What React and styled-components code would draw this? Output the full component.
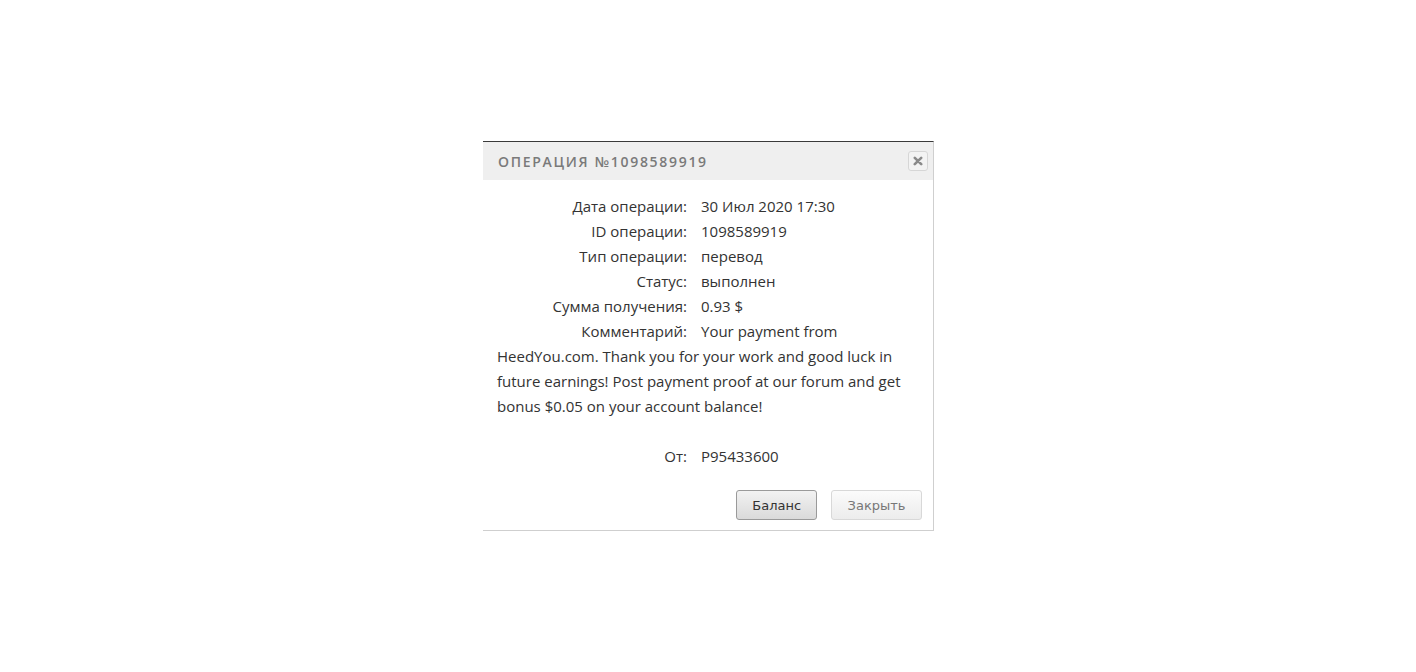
import styled, { createGlobalStyle } from 'styled-components'

const GlobalStyle = createGlobalStyle`
  html, body {
    margin: 0;
    padding: 0;
    background: #ffffff;
  }
`

const Page = styled.div`
  width: 1416px;
  height: 672px;
  display: flex;
  justify-content: center;
  align-items: flex-start;
  padding-top: 141px;
  box-sizing: border-box;
`

const Dialog = styled.div`
  width: 450px;
  margin-left: 1px;
  background: #ffffff;
  border-top: 1px solid #3a3a3a;
  border-right: 1px solid #cfcfcf;
  border-bottom: 1px solid #cfcfcf;
  font-family: "Open Sans", "Liberation Sans", sans-serif;
  color: #333333;
`

const Header = styled.div`
  height: 38px;
  background: #efefef;
  display: flex;
  align-items: center;
  justify-content: space-between;
  padding: 0 5px 0 15px;
`

const Title = styled.h3`
  margin: 0;
  font-size: 14px;
  font-weight: 600;
  letter-spacing: 1.7px;
  color: #7a7a7a;
  text-transform: uppercase;
`

const CloseButton = styled.button`
  width: 20px;
  height: 20px;
  padding: 0;
  border: 1px solid #d6d6d6;
  border-radius: 3px;
  background: #f3f3f3;
  display: flex;
  align-items: center;
  justify-content: center;
  cursor: pointer;
`

const Body = styled.div`
  padding: 14px 14px 21px 14px;
  font-size: 15px;
  line-height: 25px;
`

const Row = styled.div``

const Label = styled.span`
  display: inline-block;
  width: 190px;
  margin-right: 14px;
  text-align: right;
`

const Footer = styled.div`
  display: flex;
  justify-content: flex-end;
  gap: 14px;
  padding: 0 11px 10px 0;
`

const Button = styled.button`
  height: 30px;
  padding: 0 ${p => (p.$primary ? '15px' : '15.5px')};
  border-radius: 3px;
  font-family: "DejaVu Sans", Verdana, sans-serif;
  font-size: 13px;
  cursor: pointer;
  border: 1px solid ${p => (p.$primary ? '#9a9a9a' : '#d8d8d8')};
  color: ${p => (p.$primary ? '#333333' : '#777777')};
  background: ${p =>
    p.$primary
      ? 'linear-gradient(#f2f2f2, #dadada)'
      : 'linear-gradient(#fbfbfb, #ececec)'};
`

const rows = [
  ['Дата операции:', '30 Июл 2020 17:30'],
  ['ID операции:', '1098589919'],
  ['Тип операции:', 'перевод'],
  ['Статус:', 'выполнен'],
  ['Сумма получения:', '0.93 $'],
]

function CloseIcon() {
  return (
    <svg width="10" height="10" viewBox="0 0 10 10">
      <path
        d="M1.8 1.8 L8.2 8.2 M8.2 1.8 L1.8 8.2"
        stroke="#8a8a8a"
        strokeWidth="2.6"
        strokeLinecap="round"
      />
    </svg>
  )
}

export default function App() {
  return (
    <Page>
      <GlobalStyle />
      <Dialog>
        <Header>
          <Title>Операция №1098589919</Title>
          <CloseButton aria-label="close">
            <CloseIcon />
          </CloseButton>
        </Header>
        <Body>
          {rows.map(([label, value]) => (
            <Row key={label}>
              <Label>{label}</Label>
              {value}
            </Row>
          ))}
          <Row>
            <Label>Комментарий:</Label>
            Your payment from HeedYou.com. Thank you for your work and good
            luck in future earnings! Post payment proof at our forum and get
            bonus $0.05 on your account balance!
          </Row>
          <Row>&nbsp;</Row>
          <Row>
            <Label>От:</Label>
            P95433600
          </Row>
        </Body>
        <Footer>
          <Button $primary>Баланс</Button>
          <Button>Закрыть</Button>
        </Footer>
      </Dialog>
    </Page>
  )
}
